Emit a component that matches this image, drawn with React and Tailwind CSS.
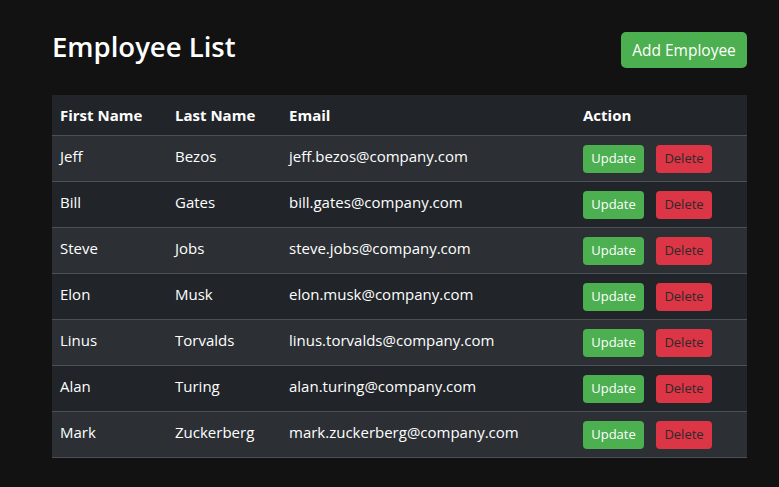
const employees = [
  ["Jeff", "Bezos", "jeff.bezos@company.com"],
  ["Bill", "Gates", "bill.gates@company.com"],
  ["Steve", "Jobs", "steve.jobs@company.com"],
  ["Elon", "Musk", "elon.musk@company.com"],
  ["Linus", "Torvalds", "linus.torvalds@company.com"],
  ["Alan", "Turing", "alan.turing@company.com"],
  ["Mark", "Zuckerberg", "mark.zuckerberg@company.com"],
]

export default function App() {
  return (
    <div className="min-h-screen w-full bg-[#121212] pl-[52px] pt-[32px] text-white [font-family:'Open_Sans',sans-serif]">
      <div className="w-[695px]">
        <div className="flex h-[36px] items-center justify-between">
          <h1 className="mb-[6px] text-[27.5px] font-semibold leading-none">Employee List</h1>
          <button className="h-[36px] w-[126px] rounded-[5px] bg-[#4caf50] pt-[2px] text-[15.5px]">Add Employee</button>
        </div>
        <table className="mt-[27px] w-full border-collapse text-left text-[15px]">
          <thead>
            <tr className="h-[40px] bg-[#212529]">
              <th className="w-[115px] px-2 font-bold">First Name</th>
              <th className="w-[114px] px-2 font-bold">Last Name</th>
              <th className="w-[294px] px-2 font-bold">Email</th>
              <th className="px-2 font-bold">Action</th>
            </tr>
          </thead>
          <tbody>
            {employees.map(([first, last, email], i) => (
              <tr key={email} className={`h-[46px] border-t border-[#4b5056] ${i % 2 === 0 ? "bg-[#2c3034]" : "bg-[#212529]"} ${i === employees.length - 1 ? "border-b" : ""}`}>
                <td className="px-2 pb-[3px]">{first}</td>
                <td className="px-2 pb-[3px]">{last}</td>
                <td className="px-2 pb-[3px]">{email}</td>
                <td className="px-2 pt-[2px]">
                  <div className="flex gap-3">
                    <button className="h-[28px] w-[61px] rounded-[4px] bg-[#4caf50] text-[13px]">Update</button>
                    <button className="h-[28px] w-[56px] rounded-[4px] bg-[#dc3545] text-[13px] text-[#2b2b2b]">Delete</button>
                  </div>
                </td>
              </tr>
            ))}
          </tbody>
        </table>
      </div>
    </div>
  )
}
